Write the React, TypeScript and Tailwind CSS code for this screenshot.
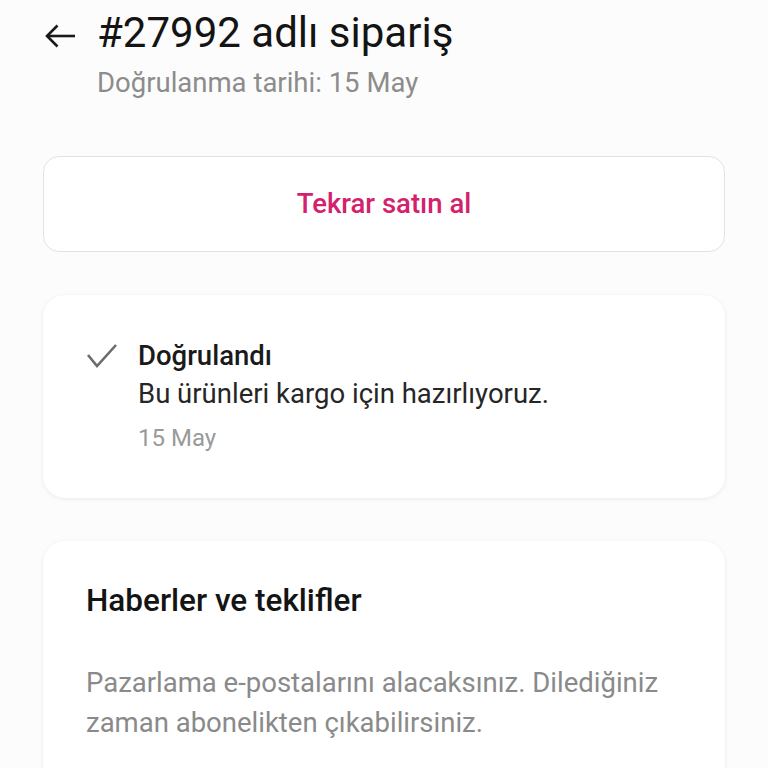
import React from "react";

export default function App() {
  return (
    <div
      className="min-h-[768px] w-[768px] bg-[#fcfcfc] overflow-hidden"
      style={{ fontFamily: "Roboto, 'Noto Sans', sans-serif" }}
    >
      <div className="flex items-start pl-[44px] pt-[9px]">
        <svg width="32" height="26" viewBox="0 0 32 26" fill="none" stroke="#1a1a1a" strokeWidth="2.6" className="mt-[14px]">
          <path d="M31 13H3" />
          <path d="M13.5 2.5L3 13l10.5 10.5" />
        </svg>
        <h1 className="ml-[21px] text-[42px] leading-[48px] text-[#141414] font-normal">
          #27992 adlı sipariş
        </h1>
      </div>
      <div className="pl-[97px] mt-[9px] text-[27.5px] leading-[34px] text-[#8c8c8c]">
        Doğrulanma tarihi: 15 May
      </div>

      <div className="mx-[43px] mt-[56px] h-[96px] rounded-[16px] border border-[#e3e3e3] bg-white flex items-center justify-center">
        <span className="text-[27.5px] font-medium text-[#d4216c]">Tekrar satın al</span>
      </div>

      <div className="mx-[43px] mt-[43px] rounded-[22px] bg-white shadow-[0_1px_4px_rgba(0,0,0,0.08)] pt-[42px] pb-[41px] pl-[43px] flex">
        <svg width="32" height="26" viewBox="0 0 32 26" fill="none" stroke="#6b6b6b" strokeWidth="2.6" className="mt-[6px]">
          <path d="M2 12l9 11L30 2" />
        </svg>
        <div className="ml-[20px] flex flex-col">
          <span className="text-[27.5px] leading-[38px] font-medium text-[#1a1a1a]">Doğrulandı</span>
          <span className="text-[27.5px] leading-[38px] text-[#262626]">Bu ürünleri kargo için hazırlıyoruz.</span>
          <span className="mt-[6px] text-[24px] leading-[38px] text-[#9a9a9a]">15 May</span>
        </div>
      </div>

      <div className="mx-[43px] mt-[43px] rounded-t-[22px] bg-white shadow-[0_1px_4px_rgba(0,0,0,0.08)] pt-[40px] pb-[40px] px-[43px]">
        <div className="text-[31.5px] leading-[40px] font-medium text-[#141414]">Haberler ve teklifler</div>
        <div className="mt-[42px] text-[27.5px] leading-[40px] text-[#8a8a8a]">
          Pazarlama e-postalarını alacaksınız. Dilediğiniz zaman abonelikten çıkabilirsiniz.
        </div>
      </div>
    </div>
  );
}
